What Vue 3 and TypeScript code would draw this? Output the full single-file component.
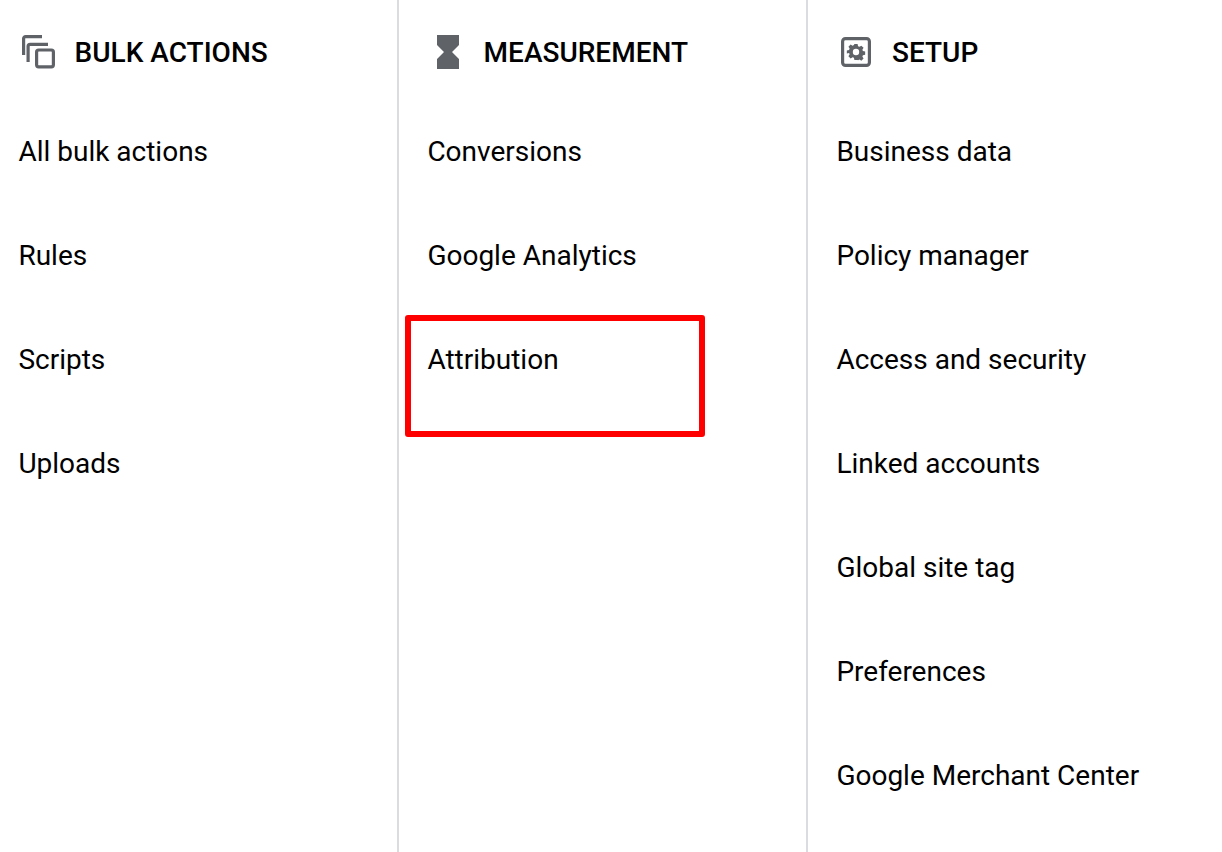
<script setup lang="ts">
interface Column {
  title: string
  icon: 'copy' | 'hourglass' | 'gear'
  items: string[]
}

const columns: Column[] = [
  { title: 'BULK ACTIONS', icon: 'copy', items: ['All bulk actions', 'Rules', 'Scripts', 'Uploads'] },
  { title: 'MEASUREMENT', icon: 'hourglass', items: ['Conversions', 'Google Analytics', 'Attribution'] },
  {
    title: 'SETUP',
    icon: 'gear',
    items: [
      'Business data',
      'Policy manager',
      'Access and security',
      'Linked accounts',
      'Global site tag',
      'Preferences',
      'Google Merchant Center',
    ],
  },
]
</script>

<template>
  <div class="menu">
    <section v-for="col in columns" :key="col.title" class="column" :class="`column-${col.icon}`">
      <header class="head">
        <svg v-if="col.icon === 'copy'" class="icon icon-copy" viewBox="0 0 34 34" fill="none" stroke="#5f6368" stroke-width="3.2">
          <path d="M20 1.6H3.6a2 2 0 0 0-2 2V20" />
          <path d="M26 9.3H8.1a2 2 0 0 0-2 2V27" />
          <rect x="14.6" y="15" width="16.8" height="16.8" rx="2" />
        </svg>
        <svg v-else-if="col.icon === 'hourglass'" class="icon icon-hourglass" viewBox="0 0 22 34" fill="#5f6368">
          <path d="M0 0H22V10L15 17L22 24V34H0V24L7 17L0 10Z" />
        </svg>
        <svg v-else class="icon icon-gear" viewBox="0 0 32 32">
          <rect x="1.7" y="1.7" width="28.6" height="28.6" rx="3" fill="none" stroke="#5f6368" stroke-width="3.4" />
          <path
            transform="translate(16 16) scale(0.85) translate(-16 -16)"
            fill="#5f6368"
            fill-rule="evenodd"
            d="M14 6h4l.6 2.8 1.7.7 2.4-1.5 2.8 2.8-1.5 2.4.7 1.7 2.8.6v4l-2.8.6-.7 1.7 1.5 2.4-2.8 2.8-2.4-1.5-1.7.7L18 26h-4l-.6-2.8-1.7-.7-2.4 1.5-2.8-2.8 1.5-2.4-.7-1.7L4.5 18v-4l2.8-.6.7-1.7-1.5-2.4 2.8-2.8 2.4 1.5 1.7-.7zM16 12a4 4 0 1 0 0 8 4 4 0 0 0 0-8z"
          />
        </svg>
        <h2 class="title">{{ col.title }}</h2>
      </header>
      <ul class="list">
        <li v-for="item in col.items" :key="item" class="item">
          {{ item }}
          <span v-if="item === 'Attribution'" class="highlight"></span>
        </li>
      </ul>
    </section>
  </div>
</template>

<style scoped>
.menu {
  display: grid;
  grid-template-columns: 399px 409px 414px;
  height: 852px;
  overflow: hidden;
  background: #fff;
  font-family: Roboto, "Liberation Sans", sans-serif;
  color: #000;
}

.column {
  box-sizing: border-box;
  height: 852px;
  padding-left: 28.4px;
  border-right: 2px solid #dadce0;
}

.column-copy {
  padding-left: 18.4px;
}

.column-gear {
  border-right: 0;
}

.head {
  box-sizing: border-box;
  display: flex;
  align-items: center;
  height: 100px;
  padding-top: 4px;
}

.icon {
  flex: none;
  display: block;
}

.icon-copy {
  width: 34px;
  height: 34px;
  margin-left: 3.6px;
  margin-right: 18.6px;
}

.icon-hourglass {
  width: 22px;
  height: 34px;
  margin-left: 9.6px;
  margin-right: 24.6px;
}

.icon-gear {
  width: 30px;
  height: 30px;
  margin-left: 5.1px;
  margin-right: 20.5px;
}

.title {
  margin: 2px 0 0;
  font-size: 28px;
  font-weight: 500;
  line-height: 32px;
}

.list {
  list-style: none;
  margin: 0;
  padding: 0;
}

.item {
  position: relative;
  height: 104px;
  font-size: 28px;
  line-height: 104px;
  white-space: nowrap;
}

.highlight {
  position: absolute;
  left: -22.4px;
  top: 7px;
  width: 300px;
  height: 122px;
  box-sizing: border-box;
  border: 6px solid #ff0000;
  border-radius: 3px;
}
</style>

<style>
html,
body {
  margin: 0;
  background: #fff;
}
</style>
